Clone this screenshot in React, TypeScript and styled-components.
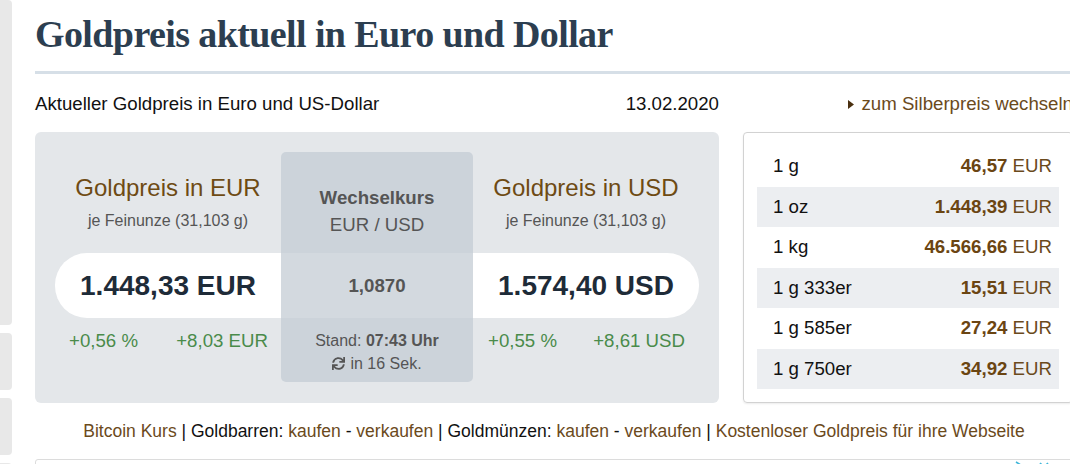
import styled, { createGlobalStyle } from 'styled-components';
import { FaSync } from 'react-icons/fa';

const GlobalStyle = createGlobalStyle`
  html, body {
    margin: 0;
    padding: 0;
    background: #fff;
    overflow: hidden;
  }
  body {
    font-family: "Liberation Sans", Arial, sans-serif;
    color: #111;
  }
`;

const BROWN = '#6b4a1c';

// Page frame
const Page = styled.div`
  display: flex;
  gap: 23px;
  width: 1100px;
  height: 464px;
  overflow: hidden;
`;

const Sidebar = styled.aside`
  width: 12px;
  flex-shrink: 0;
  display: flex;
  flex-direction: column;
  gap: 8px;
`;

const SideTab = styled.div<{ $h: number }>`
  height: ${p => p.$h}px;
  flex-shrink: 0;
  background: #e8e8e8;
  border-radius: 0 4px 4px 0;
`;

const Main = styled.main`
  width: 1038px;
  flex-shrink: 0;
`;

const Title = styled.h1`
  margin: 0;
  padding: 15px 0 18px;
  font-family: "Liberation Serif", "Times New Roman", serif;
  font-size: 38px;
  line-height: 38px;
  letter-spacing: -0.6px;
  font-weight: 700;
  color: #2c3e50;
  border-bottom: 3px solid #d6dfe7;
`;

const Columns = styled.div`
  display: grid;
  grid-template-columns: 684px 330px;
  column-gap: 24px;
`;

const InfoRow = styled(Columns)`
  margin: 19px 0 17px;
  font-size: 18.67px;
  line-height: 22px;
`;

const InfoLeft = styled.div`
  display: flex;
  justify-content: space-between;
`;

const SilverLink = styled.a`
  display: flex;
  align-items: center;
  justify-content: flex-end;
  gap: 7px;
  color: ${BROWN};
  text-decoration: none;
  white-space: nowrap;
`;

// Price box
const PriceBox = styled.section`
  background: #e4e7ea;
  border-radius: 6px;
  padding: 20px;
  display: grid;
  grid-template-columns: 226px 192px 226px;
  grid-template-rows: 101px 65px 64px;
`;

const Pill = styled.div`
  grid-area: 2 / 1 / 3 / 4;
  background: #fff;
  border-radius: 32px;
`;

const SideHead = styled.div<{ $col: number }>`
  grid-area: 1 / ${p => p.$col};
  padding-top: 22px;
  text-align: center;
`;

const HeadTitle = styled.div`
  font-size: 24px;
  line-height: 28px;
  color: #6e4b14;
`;

const HeadSub = styled.div`
  margin-top: 9px;
  font-size: 16px;
  line-height: 20px;
  color: #555;
`;

const Price = styled.div<{ $col: number }>`
  grid-area: 2 / ${p => p.$col};
  display: flex;
  align-items: center;
  justify-content: center;
  font-size: 28px;
  font-weight: 700;
  color: #1e2b38;
`;

const Changes = styled.div<{ $col: number; $pad: number }>`
  grid-area: 3 / ${p => p.$col};
  display: flex;
  justify-content: space-between;
  padding: 11px ${p => p.$pad}px 0 ${p => p.$pad + 1}px;
  font-size: 18.67px;
  line-height: 23px;
  color: #4a8b4a;
`;

const CenterCell = styled.div<{ $part: 'top' | 'mid' | 'bottom' }>`
  grid-column: 2;
  grid-row: ${p => (p.$part === 'top' ? 1 : p.$part === 'mid' ? 2 : 3)};
  background: ${p => (p.$part === 'mid' ? '#d3d9df' : '#ccd3da')};
  border-radius: ${p => (p.$part === 'top' ? '5px 5px 0 0' : p.$part === 'bottom' ? '0 0 5px 5px' : '0')};
  color: #555;
  text-align: center;
  display: flex;
  flex-direction: column;
  align-items: center;
  justify-content: ${p => (p.$part === 'mid' ? 'center' : 'flex-start')};
  padding-top: ${p => (p.$part === 'top' ? 32 : p.$part === 'bottom' ? 11 : 0)}px;
  font-size: ${p => (p.$part === 'bottom' ? 16 : 18.67)}px;
  line-height: ${p => (p.$part === 'top' ? 27 : 23)}px;
`;

const Bold = styled.b`
  font-weight: 700;
`;

const Refresh = styled.span`
  display: inline-flex;
  align-items: center;
  gap: 5px;
  svg {
    color: #555;
  }
`;

// Weight table
const TableBox = styled.section`
  border: 1px solid #d2d2d2;
  border-radius: 4px;
  padding: 13px;
  box-shadow: 0 1px 2px rgba(0, 0, 0, 0.08);
`;

const WeightRow = styled.div<{ $striped: boolean }>`
  height: 40.5px;
  display: flex;
  align-items: center;
  justify-content: space-between;
  padding: 0 7px 0 16px;
  background: ${p => (p.$striped ? '#eceef1' : 'transparent')};
  font-size: 18.67px;
  color: #111;
`;

const WeightValue = styled.span`
  color: ${BROWN};
  b {
    font-weight: 700;
    color: #6b4512;
  }
`;

// Footer
const LinkLine = styled.nav`
  margin: 17px 0;
  text-align: center;
  font-size: 17.5px;
  line-height: 22px;
  color: #111;
  white-space: nowrap;
`;

const FooterLink = styled.a`
  color: ${BROWN};
  text-decoration: none;
`;

const BottomBox = styled.div`
  position: relative;
  height: 20px;
  border: 1px solid #dcdcdc;
  border-radius: 3px 3px 0 0;
`;

const AdMark = styled.svg`
  position: absolute;
  top: 0;
  right: 18px;
`;

const weights = [
  { label: '1 g', value: '46,57' },
  { label: '1 oz', value: '1.448,39' },
  { label: '1 kg', value: '46.566,66' },
  { label: '1 g 333er', value: '15,51' },
  { label: '1 g 585er', value: '27,24' },
  { label: '1 g 750er', value: '34,92' },
];

function App() {
  return (
    <>
      <GlobalStyle />
      <Page>
        <Sidebar>
          <SideTab $h={325} />
          <SideTab $h={57} />
          <SideTab $h={57} />
          <SideTab $h={57} />
        </Sidebar>

        <Main>
          <Title>Goldpreis aktuell in Euro und Dollar</Title>

          <InfoRow>
            <InfoLeft>
              <span>Aktueller Goldpreis in Euro und US-Dollar</span>
              <span>13.02.2020</span>
            </InfoLeft>
            <SilverLink href="#">
              <svg width="6" height="9" viewBox="0 0 6 9">
                <path d="M0 0 L6 4.5 L0 9 Z" fill="#4a3010" />
              </svg>
              zum Silberpreis wechseln
            </SilverLink>
          </InfoRow>

          <Columns>
            <PriceBox>
              <Pill />

              <SideHead $col={1}>
                <HeadTitle>Goldpreis in EUR</HeadTitle>
                <HeadSub>je Feinunze (31,103 g)</HeadSub>
              </SideHead>
              <SideHead $col={3}>
                <HeadTitle>Goldpreis in USD</HeadTitle>
                <HeadSub>je Feinunze (31,103 g)</HeadSub>
              </SideHead>

              <Price $col={1}>1.448,33 EUR</Price>
              <Price $col={3}>1.574,40 USD</Price>

              <Changes $col={1} $pad={13}>
                <span>+0,56 %</span>
                <span>+8,03 EUR</span>
              </Changes>
              <Changes $col={3} $pad={14}>
                <span>+0,55 %</span>
                <span>+8,61 USD</span>
              </Changes>

              <CenterCell $part="top">
                <Bold>Wechselkurs</Bold>
                <span>EUR / USD</span>
              </CenterCell>
              <CenterCell $part="mid">
                <Bold>1,0870</Bold>
              </CenterCell>
              <CenterCell $part="bottom">
                <span>
                  Stand: <Bold>07:43 Uhr</Bold>
                </span>
                <Refresh>
                  <FaSync size={13} />
                  in 16 Sek.
                </Refresh>
              </CenterCell>
            </PriceBox>

            <TableBox>
              {weights.map((w, i) => (
                <WeightRow key={w.label} $striped={i % 2 === 1}>
                  <span>{w.label}</span>
                  <WeightValue>
                    <b>{w.value}</b> EUR
                  </WeightValue>
                </WeightRow>
              ))}
            </TableBox>
          </Columns>

          <LinkLine>
            <FooterLink href="#">Bitcoin Kurs</FooterLink> | Goldbarren:{' '}
            <FooterLink href="#">kaufen</FooterLink> - <FooterLink href="#">verkaufen</FooterLink> |
            Goldmünzen: <FooterLink href="#">kaufen</FooterLink> -{' '}
            <FooterLink href="#">verkaufen</FooterLink> |{' '}
            <FooterLink href="#">Kostenloser Goldpreis für ihre Webseite</FooterLink>
          </LinkLine>

          <BottomBox>
            <AdMark width="40" height="12" viewBox="0 0 40 12">
              <path d="M2 2 L10 7 L2 12" fill="none" stroke="#3fb6d9" strokeWidth="1.6" />
              <path d="M26 3 L34 11 M34 3 L26 11" stroke="#3fb6d9" strokeWidth="1.6" />
            </AdMark>
          </BottomBox>
        </Main>
      </Page>
    </>
  );
}

export default App;
